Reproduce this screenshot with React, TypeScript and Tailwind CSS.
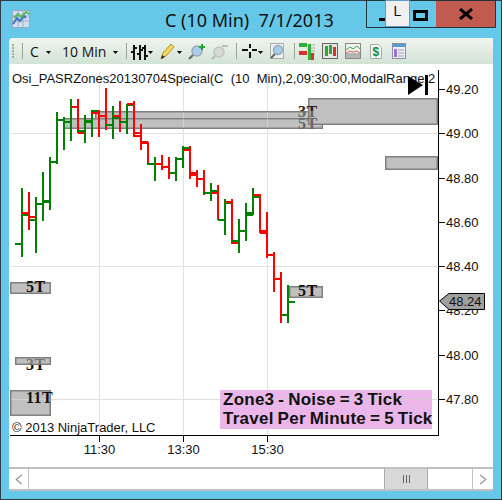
import React from "react";

type Bar = [number, number, number, number, number, number];
// x, high, low, open, close, up(1)/down(0)
const bars: Bar[] = [
  [22,188,257,244,215,1],[29,192,230,213,217,0],[36,197,253,220,204,1],[43,172,221,204,201,1],
  [50,157,210,202,162,1],[57,112,164,162,120,1],[64,117,150,120,122,1],[71,99,141,122,107,1],
  [78,99,133,107,133,0],[85,115,143,131,122,1],[92,110,137,121,111,1],[99,110,137,113,116,0],
  [106,88,130,116,125,0],[113,106,139,125,118,1],[120,101,132,116,122,0],[127,104,134,122,105,1],
  [134,101,137,104,133,0],[141,124,150,136,143,0],[148,142,165,142,164,0],[155,157,181,164,164,1],
  [162,155,170,164,167,0],[169,157,179,167,173,0],[176,157,181,173,159,1],[183,146,168,159,148,1],
  [190,146,179,150,175,0],[197,170,187,173,179,0],[204,170,195,179,193,0],[211,183,201,193,191,1],
  [218,185,220,193,220,0],[225,199,235,220,203,1],[232,199,244,202,243,0],[239,219,253,241,231,1],
  [246,203,241,231,215,1],[253,188,215,213,197,1],[260,194,233,195,233,0],[267,212,258,231,255,0],
  [274,252,292,255,279,0],[281,272,323,279,315,0],[288,285,323,315,302,1],
];

const ticks: [number, string][] = [[89,"49.20"],[133,"49.00"],[178,"48.80"],[222,"48.60"],[266,"48.40"],[310,"48.20"],[355,"48.00"],[399,"47.80"]];

function Arrow({ x, y = 51 }: { x: number; y?: number }) {
  return <polygon points={`${x},${y} ${x + 5},${y} ${x + 2.5},${y + 3}`} fill="#000" />;
}

function Toolbar() {
  return (
    <svg viewBox="9 38 484 26" className="block h-[26px] w-[484px]">
      <rect x="22" y="43" width="1" height="16" fill="#9aa59c" />
      <g fill="#a4b0a6">
        {[44, 47, 50, 53, 56].map((y) => <rect key={y} x="12" y={y} width="2" height="2" />)}
      </g>
      <text x="30" y="57" fontFamily="'Open Sans',sans-serif" fontSize="14" fill="#111">C</text>
      <Arrow x={46} />
      <text x="62" y="57" fontFamily="'Open Sans',sans-serif" fontSize="14" fill="#111">10 Min</text>
      <Arrow x={113} />
      <rect x="126" y="43" width="1" height="16" fill="#9aa59c" />
      <g fill="#111">
        <rect x="133" y="45" width="2" height="15" /><rect x="131" y="51" width="2" height="2" /><rect x="135" y="47" width="2" height="2" />
        <rect x="139" y="45" width="2" height="15" /><rect x="137" y="53" width="2" height="2" /><rect x="141" y="49" width="2" height="2" />
        <rect x="144" y="45" width="2" height="15" /><rect x="142" y="47" width="2" height="2" /><rect x="146" y="55" width="2" height="2" />
      </g>
      <Arrow x={148} />
      <polygon points="161,59 163,53 171,44 174,47 166,56" fill="#f7d95a" stroke="#a8923a" strokeWidth="1" />
      <polygon points="161,59 162,55 165,57" fill="#333" />
      <Arrow x={177} />
      <circle cx="197" cy="51" r="5" fill="#a9cdf0" stroke="#9aa8b8" strokeWidth="1.5" />
      <line x1="193" y1="55" x2="189" y2="59" stroke="#666" strokeWidth="2" />
      <path d="M202 44v6M199 47h6" stroke="#1fa82b" strokeWidth="2" />
      <circle cx="219" cy="52" r="5" fill="#d6dad6" stroke="#c0c4c0" strokeWidth="1.5" />
      <line x1="215" y1="56" x2="212" y2="59" stroke="#b4b6b3" strokeWidth="2" />
      <path d="M222 46h6" stroke="#bcbebb" strokeWidth="2" />
      <rect x="236" y="43" width="1" height="16" fill="#9aa59c" />
      <path d="M242 50h6M252 50h5M250 44v4M250 52v6" stroke="#111" strokeWidth="2" />
      <Arrow x={258} />
      <rect x="270.5" y="43.5" width="13" height="15" fill="#eef1ee" stroke="#a9aea9" />
      <circle cx="278" cy="50" r="4.5" fill="#a9cdf0" stroke="#9aa8b8" strokeWidth="1.5" />
      <line x1="275" y1="54" x2="271" y2="58" stroke="#666" strokeWidth="2" />
      <rect x="294" y="43" width="1" height="16" fill="#9aa59c" />
      <path d="M307 45h8M307 48h8M307 51h8M307 54h8" stroke="#aab0aa" />
      <rect x="299" y="43" width="8" height="4" fill="#2fb03a" /><rect x="299" y="51" width="8" height="4" fill="#d8322c" />
      <rect x="308" y="44" width="3" height="16" fill="#35b040" />
      <rect x="311" y="53" width="3" height="7" fill="#d8322c" />
      <rect x="322.5" y="43.5" width="15" height="15" fill="#e4e6e3" stroke="#666" />
      <rect x="325" y="46" width="3" height="10" fill="#2fa83a" /><rect x="329" y="45" width="3" height="9" fill="#2fa83a" /><rect x="333" y="47" width="3" height="9" fill="#d8322c" />
      <rect x="345.5" y="43.5" width="15" height="15" fill="#f0f3f0" stroke="#888" />
      <rect x="346" y="53" width="14" height="5" fill="#b4b4b4" />
      <path d="M346 50l4-3 3 2 4-3 3 3" stroke="#46a64e" strokeWidth="1" fill="none" />
      <path d="M346 53l4-2 3 1 4-1 3 2" stroke="#d8625c" strokeWidth="1" fill="none" />
      <path d="M370.5 44.5h8l3 3v11h-11z" fill="#f6f7f6" stroke="#a5aaa5" />
      <text x="372.5" y="56" fontFamily="'Liberation Sans',sans-serif" fontWeight="700" fontSize="12" fill="#1c8a34">$</text>
      <rect x="392.5" y="43.5" width="13" height="15" fill="#eef0f6" stroke="#8e8fa6" />
      <rect x="393" y="44" width="12" height="3" fill="#5a9bd0" />
      <rect x="394" y="49" width="3" height="8" fill="#a070d0" />
      <path d="M398 50h6M398 53h6M398 56h6" stroke="#9aa0b0" />
    </svg>
  );
}

function Chart() {
  const zone = (x: number, y: number, w: number, h: number, key: string) => (
    <rect key={key} x={x + 0.75} y={y + 0.75} width={w - 1.5} height={h - 1.5} fill="#c0c0c0" stroke="#808080" strokeWidth="1.5" />
  );
  const tag = { fontFamily: "'Liberation Serif',serif", fontWeight: 700, fontSize: 16, letterSpacing: 0.5, fill: "#111" } as const;
  const sans = { fontFamily: "'Liberation Sans',sans-serif", fontSize: 13, fill: "#111" } as const;
  const note = { fontFamily: "'Liberation Sans',sans-serif", fontWeight: 700, fontSize: 17, letterSpacing: 0.25, wordSpacing: -1, fill: "#111" } as const;
  return (
    <svg viewBox="9 64 484 403" className="block h-[403px] w-[484px]">
      <defs>
        <linearGradient id="upper3t" gradientUnits="userSpaceOnUse" x1="0" y1="106" x2="0" y2="118">
          <stop offset="0.42" stopColor="#222" /><stop offset="0.42" stopColor="#666" />
        </linearGradient>
        <linearGradient id="lower3t" gradientUnits="userSpaceOnUse" x1="0" y1="359" x2="0" y2="371">
          <stop offset="0.5" stopColor="#777" /><stop offset="0.5" stopColor="#111" />
        </linearGradient>
      </defs>
      <g fill="#e2e2e2">
        <rect x="99" y="72" width="1" height="363" /><rect x="183" y="72" width="1" height="363" /><rect x="267" y="72" width="1" height="363" />
        <rect x="11" y="133" width="427" height="1" /><rect x="11" y="266" width="427" height="1" /><rect x="11" y="399" width="427" height="1" />
      </g>
      <rect x="220" y="390" width="212" height="39" fill="#ebb7eb" />
      <rect x="267" y="390" width="1" height="39" fill="#d8c8d8" />
      <rect x="220" y="399" width="212" height="1" fill="#d8c8d8" />

      {zone(95, 111, 228, 18, "a")}
      {zone(63, 118, 260, 11, "b")}
      {zone(308, 98, 130, 27, "c")}
      {zone(385, 156, 53, 14, "d")}
      {zone(10, 282, 41, 12, "e")}
      {zone(15, 357, 36, 8, "f")}
      {zone(10, 390, 41, 26, "g")}
      {zone(289, 286, 34, 12, "h")}
      <g fill="#ffffff" fillOpacity="0.25">
        <rect x="99" y="112" width="1" height="16" /><rect x="183" y="112" width="1" height="16" /><rect x="267" y="112" width="1" height="16" />
        <rect x="11" y="399" width="39" height="1" />
      </g>
      <text x="298" y="117" {...tag} fill="url(#upper3t)">3T</text>
      <text x="298" y="129" {...tag} fill="#666">5T</text>
      <text x="26" y="370" {...tag} fill="url(#lower3t)">3T</text>
      <text x="26" y="292" {...tag}>5T</text>
      <text x="26" y="403" {...tag}>11T</text>
      <text x="298" y="296" {...tag}>5T</text>

      {bars.map(([x, h, l, o, c, up]) => {
        const col = up ? "#008000" : "#ff0000";
        return (
          <g key={x} fill={col}>
            <rect x={x - 1} y={h} width="2" height={l - h} />
            <rect x={x - 7} y={o - 1} width="7" height="2" />
            <rect x={x} y={c - 1} width="7" height="2" />
          </g>
        );
      })}

      <text x="12" y="83" fontFamily="'Liberation Sans',sans-serif" fontSize="13" fill="#111" xmlSpace="preserve">Osi_PASRZones20130704Special(C  (10  Min),2,09:30:00,ModalRange,2</text>
      <polygon points="408,76 423,85 408,95" fill="#000" />
      <rect x="425" y="75" width="3" height="20" fill="#000" />

      <rect x="438" y="70" width="1" height="366" fill="#000" />
      <rect x="10" y="435" width="429" height="1" fill="#000" />
      {ticks.map(([y, t]) => (
        <g key={t}>
          <rect x="439" y={y} width="6" height="1" fill="#000" />
          <text x="446" y={y + 5} {...sans}>{t}</text>
        </g>
      ))}
      <polygon points="439.5,301 449,293.5 484.5,293.5 484.5,309.5 449,309.5" fill="#a0a0a0" stroke="#000" />
      <text x="449" y="306" {...sans}>48.24</text>

      <text x="12" y="432" {...sans}>© 2013 NinjaTrader, LLC</text>
      {[[99, "11:30"], [183, "13:30"], [267, "15:30"]].map(([x, t]) => (
        <g key={t}>
          <rect x={Number(x)} y="436" width="1" height="6" fill="#000" />
          <text x={Number(x) + 0.5} y="454" textAnchor="middle" {...sans}>{t}</text>
        </g>
      ))}
      <text x="223" y="405" {...note}>Zone3 - Noise = 3 Tick</text>
      <text x="223" y="424" {...note}>Travel Per Minute = 5 Tick</text>
    </svg>
  );
}

export default function App() {
  return (
    <div className="relative flex h-[500px] w-[502px] flex-col border border-[#2e3d47] bg-[#66c8e9]">
      <div className="relative flex h-[37px] shrink-0 items-center">
        <svg viewBox="0 0 18 18" className="absolute left-[11px] top-[9px] h-[18px] w-[18px]">
          <rect x="0.5" y="0.5" width="17" height="17" fill="#cfe0ee" stroke="#9aa8c4" />
          <path d="M1 6h16M1 11h16M6 1v16M11 1v16" stroke="#a9a9c9" strokeWidth="1" />
          <path d="M1 14l4-6 3 3 4-5 2 2" stroke="#3b74c9" strokeWidth="2" fill="none" />
          <path d="M2 8l4-4 3 3 5-5 3 2" stroke="#5cb85c" strokeWidth="2" fill="none" />
        </svg>
        <div className="absolute left-[164px] top-[7px] whitespace-pre font-['Noto_Sans',sans-serif] text-[18px] leading-[24px] text-[#111]">C (10 Min)  7/1/2013</div>
        <div className="absolute left-[365px] top-[-1px] flex h-[28px] w-[130px] border border-[#25343f]">
          <div className="relative w-[69px]">
            <div className="absolute left-[12px] top-[17px] h-[3px] w-[6px] bg-black" />
            <div className="absolute left-[46px] top-[9px] h-[11px] w-[15px] border-[3px] border-black" />
          </div>
          <div className="flex flex-1 items-center justify-center bg-[#c15b50]">
            <svg viewBox="0 0 14 12" className="h-[12px] w-[14px]"><path d="M1 1l12 10M13 1L1 11" stroke="#000" strokeWidth="3" /></svg>
          </div>
        </div>
        <div className="absolute left-[384px] top-[-1px] flex h-[27px] w-[25px] items-start justify-center border border-[#5d9bc9] bg-[#f0f0f0] pt-[2px] font-['Liberation_Sans',sans-serif] text-[14px] leading-[16px] text-[#111]">L</div>
      </div>
      <div className="ml-[8px] w-[484px]">
        <div className="h-[26px] rounded-tl-[4px] bg-gradient-to-b from-[#f0f5ef] to-[#d3e3d6]"><Toolbar /></div>
        <div className="bg-white"><Chart /></div>
        <div className="flex h-[24px] border-y-2 border-[#c0c0c0] bg-white">
          <div className="flex w-[20px] items-center justify-center border-r border-[#c0c0c0]">
            <svg viewBox="0 0 8 12" className="h-[11px] w-[8px]"><path d="M7 1L1 6l6 5" stroke="#888" strokeWidth="1.2" fill="none" /></svg>
          </div>
          <div className="ml-[355px] flex w-[44px] items-center justify-center gap-[2px] border-x border-[#aaaaaa] bg-[#d8d8d8]">
            <span className="h-[8px] w-px bg-[#666]" /><span className="h-[8px] w-px bg-[#666]" /><span className="h-[8px] w-px bg-[#666]" />
          </div>
          <div className="ml-[44px] flex w-[21px] items-center justify-center border-l border-[#c0c0c0]">
            <svg viewBox="0 0 8 12" className="h-[11px] w-[8px]"><path d="M1 1l6 5-6 5" stroke="#888" strokeWidth="1.2" fill="none" /></svg>
          </div>
        </div>
      </div>
    </div>
  );
}
